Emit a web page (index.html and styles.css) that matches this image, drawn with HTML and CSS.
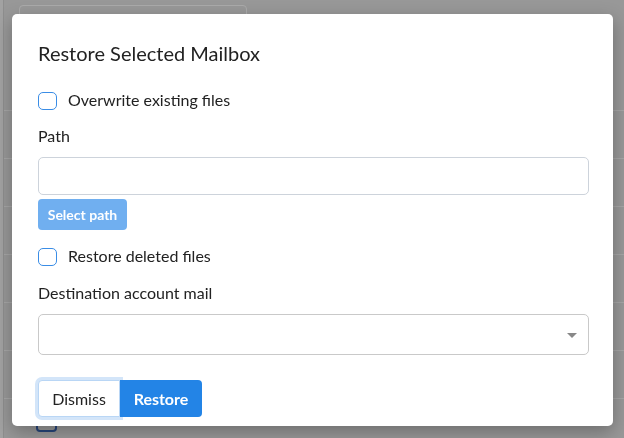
FILE: index.html
```html
<!DOCTYPE html>
<html>
<head>
<meta charset="utf-8">
<link rel="stylesheet" href="styles.css">
</head>
<body>
<div class="page">
  <div class="rail"></div>
  <div class="main">
    <div class="card"></div>
    <div class="table">
      <div class="row"></div>
      <div class="row"></div>
      <div class="row"></div>
      <div class="row"></div>
      <div class="row"></div>
      <div class="row"></div>
      <div class="row last"><span class="row-check"></span></div>
    </div>
  </div>
</div>

<div class="modal">
  <h5 class="title">Restore Selected Mailbox</h5>
  <label class="check first"><span class="box"></span><span class="check-text">Overwrite existing files</span></label>
  <div class="label path-label">Path</div>
  <div class="input"></div>
  <button class="btn-select">Select path</button>
  <label class="check second"><span class="box"></span><span class="check-text">Restore deleted files</span></label>
  <div class="label dest-label">Destination account mail</div>
  <div class="select"><span class="caret"></span></div>
  <div class="footer">
    <button class="btn dismiss">Dismiss</button>
    <button class="btn restore">Restore</button>
  </div>
</div>
</body>
</html>
```

FILE: styles.css
```css
* { box-sizing: border-box; }
html, body { margin: 0; padding: 0; }
body {
  width: 624px;
  height: 438px;
  overflow: hidden;
  background: #989898;
  font-family: "Lato", "Open Sans", sans-serif;
  color: #222;
}
.page {
  display: flex;
  height: 438px;
}
.rail {
  width: 4px;
  background: #a2a2a2;
  border-right: 1px solid #8e8e8e;
}
.main {
  flex: 1;
  display: flex;
  flex-direction: column;
}
.card {
  margin: 5px 0 0 15px;
  width: 228px;
  height: 60px;
  border: 1px solid #ababab;
  border-radius: 4px;
  flex: none;
}
.table {
  margin-top: 45px;
  display: flex;
  flex-direction: column;
}
.row {
  height: 48px;
  border-top: 1px solid #a6a6a6;
}
.row-check {
  display: block;
  margin: 13px 0 0 32px;
  width: 21px;
  height: 20px;
  border: 2px solid #27457a;
  border-radius: 4px;
}

.modal {
  position: fixed;
  top: 14px;
  left: 12px;
  width: 601px;
  height: 412px;
  background: #fff;
  border-radius: 5px;
  box-shadow: 0 6px 18px rgba(0, 0, 0, 0.28);
  padding: 27px 24px 0 26px;
  display: flex;
  flex-direction: column;
}
.title {
  margin: 0;
  font-size: 20px;
  line-height: 24px;
  font-weight: 400;
  color: #222;
}
.check {
  display: flex;
  align-items: center;
  height: 18px;
  font-size: 16px;
  color: #222;
}
.check-text { padding-bottom: 3px; }
.check.first { margin-top: 27px; }
.check.second { margin-top: 18px; }
.box {
  width: 19px;
  height: 18px;
  border: 1px solid #3a8de6;
  border-radius: 5px;
  margin-right: 11px;
  flex: none;
}
.label {
  font-size: 16px;
  line-height: 24px;
  color: #222;
}
.path-label { margin-top: 14px; }
.dest-label { margin-top: 15px; }
.input {
  margin-top: 9px;
  height: 38px;
  border: 1px solid #cdd3db;
  border-radius: 5px;
}
.btn-select {
  margin-top: 4px;
  align-self: flex-start;
  width: 89px;
  height: 31px;
  border: none;
  border-radius: 4px;
  background: #70aff0;
  color: #fff;
  font-family: inherit;
  font-weight: 700;
  font-size: 14px;
  padding: 0;
}
.select {
  margin-top: 9px;
  height: 41px;
  border: 1px solid #c9c9c9;
  border-radius: 5px;
  display: flex;
  align-items: center;
  justify-content: flex-end;
  padding-right: 11px;
}
.caret {
  width: 0;
  height: 0;
  border-left: 5px solid transparent;
  border-right: 5px solid transparent;
  border-top: 5px solid #888;
  margin-top: 2px;
}
.footer {
  margin-top: 25px;
  display: flex;
}
.btn {
  width: 82px;
  height: 37px;
  font-family: inherit;
  font-size: 16px;
  padding: 0;
}
.dismiss {
  background: #fff;
  color: #222;
  border: 1px solid #b9d6f5;
  border-radius: 4px 0 0 4px;
  box-shadow: 0 0 0 3px #d3e5f9;
}
.restore {
  background: #2384e6;
  color: #fff;
  font-weight: 700;
  border: none;
  border-radius: 0 4px 4px 0;
}
```
